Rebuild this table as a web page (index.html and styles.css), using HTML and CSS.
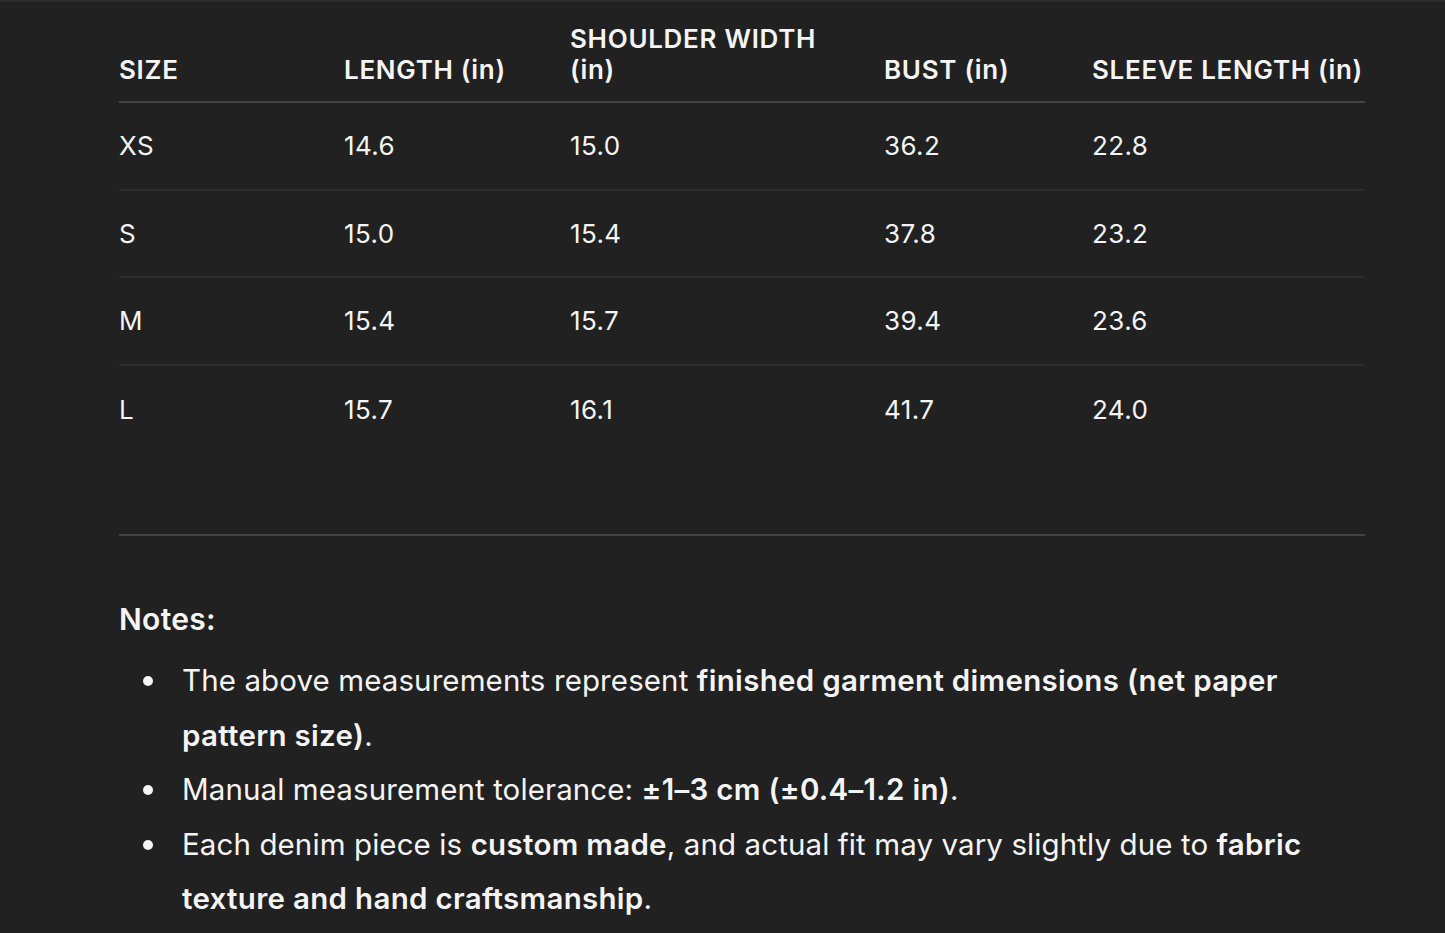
FILE: index.html
```html
<!DOCTYPE html>
<html lang="en">
<head>
<meta charset="utf-8">
<title>Size chart</title>
<link rel="stylesheet" href="styles.css">
</head>
<body>
<main class="page">
  <table class="size-table">
    <colgroup>
      <col class="c1"><col class="c2"><col class="c3"><col class="c4"><col class="c5">
    </colgroup>
    <thead>
      <tr>
        <th>SIZE</th>
        <th>LENGTH (in)</th>
        <th>SHOULDER WIDTH (in)</th>
        <th>BUST (in)</th>
        <th class="last">SLEEVE LENGTH (in)</th>
      </tr>
    </thead>
    <tbody>
      <tr><td>XS</td><td>14.6</td><td>15.0</td><td>36.2</td><td>22.8</td></tr>
      <tr><td>S</td><td>15.0</td><td>15.4</td><td>37.8</td><td>23.2</td></tr>
      <tr><td>M</td><td>15.4</td><td>15.7</td><td>39.4</td><td>23.6</td></tr>
      <tr><td>L</td><td>15.7</td><td>16.1</td><td>41.7</td><td>24.0</td></tr>
    </tbody>
  </table>
  <hr class="rule">
  <section class="notes">
    <h3 class="notes-title">Notes:</h3>
    <ul class="notes-list">
      <li>The above measurements represent <strong>finished garment dimensions (net paper pattern size)</strong>.</li>
      <li>Manual measurement tolerance: <strong>±1–3 cm (±0.4–1.2 in)</strong>.</li>
      <li>Each denim piece is <strong>custom made</strong>, and actual fit may vary slightly due to <strong>fabric texture and hand craftsmanship</strong>.</li>
    </ul>
  </section>
</main>
</body>
</html>
```
FILE: styles.css
```css
html, body {
  margin: 0;
  padding: 0;
}
body {
  background: #212121;
  border-top: 2px solid #2b2b2b;
  color: #f4f4f4;
  font-family: Inter, "Noto Sans", "Liberation Sans", sans-serif;
  overflow: hidden;
}
.page {
  width: 1246px;
  padding: 21px 0 0 119px;
}
.size-table {
  width: 1246px;
  border-collapse: collapse;
  table-layout: fixed;
}
.c1 { width: 225px; }
.c2 { width: 226px; }
.c3 { width: 314px; }
.c4 { width: 208px; }
.c5 { width: 273px; }
.size-table th {
  text-align: left;
  vertical-align: bottom;
  font-size: 26px;
  font-weight: 600;
  line-height: 31px;
  padding: 0 28px 16px 0;
  border-bottom: 2px solid #444444;
  letter-spacing: 0.7px;
}
.size-table th.last {
  padding-right: 0;
  white-space: nowrap;
}
.size-table td {
  font-size: 26px;
  font-weight: 400;
  letter-spacing: 0.4px;
  height: 85.6px;
  padding: 0;
  border-bottom: 2px solid #2c2c2c;
  vertical-align: middle;
}
.size-table tbody tr:last-child td {
  border-bottom: none;
  height: 87.6px;
}
.rule {
  margin: 81px 0 0 0;
  border: none;
  height: 2px;
  background: #444444;
}
.notes-title {
  margin: 66px 0 0 0;
  font-size: 30px;
  font-weight: 600;
  letter-spacing: 0.3px;
  line-height: 34px;
}
.notes-list {
  margin: 17px 0 0 0;
  padding-left: 63px;
  font-size: 29.5px;
  letter-spacing: 0.1px;
  line-height: 54.5px;
  list-style: none;
}
.notes-list li {
  position: relative;
}
.notes-list li::before {
  content: "";
  position: absolute;
  left: -39px;
  top: 23px;
  width: 10px;
  height: 10px;
  border-radius: 50%;
  background: #f4f4f4;
}
.notes-list strong {
  font-weight: 600;
  letter-spacing: 0.3px;
}
```
